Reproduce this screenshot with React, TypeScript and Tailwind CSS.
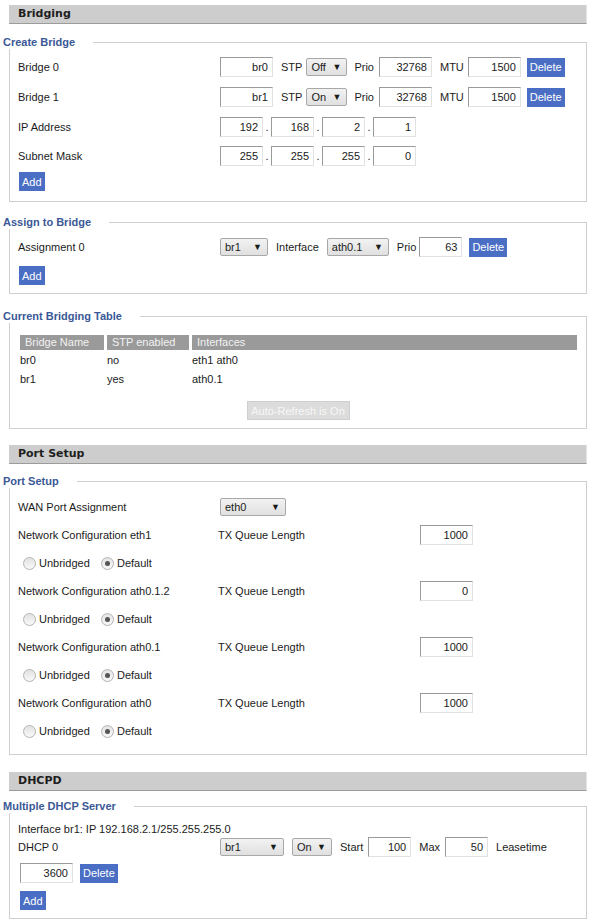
import type { ReactNode } from "react";

const BODY_FONT = "font-['Liberation_Sans',Arial,sans-serif]";

function SectionBar({ title, className = "" }: { title: string; className?: string }) {
  return (
    <div
      className={`flex h-[19px] items-center border-b border-r border-b-[#9c9c9c] border-r-[#e4e4e4] bg-[#cdcdcd] pl-[9px] font-['DejaVu_Sans',Verdana,sans-serif] text-[11px] font-bold text-[#1e1e1e] ${className}`}
    >
      {title}
    </div>
  );
}

function Fieldset({
  legend,
  className = "",
  children,
}: {
  legend: string;
  className?: string;
  children: ReactNode;
}) {
  return (
    <div className={`border border-[#cfcfcf] px-[8px] ${className}`}>
      <div className="-mt-[7px] -ml-[15px] w-fit bg-white pr-[18px] text-[11px] leading-[13px] font-bold text-[#3a5896]">
        {legend}
      </div>
      {children}
    </div>
  );
}

function TextInput({ value, width }: { value: string; width: string }) {
  return (
    <div
      className={`flex h-[20px] shrink-0 items-center justify-end border border-t-[#9a9a9a] border-l-[#9a9a9a] border-r-[#e2e2e2] border-b-[#e2e2e2] bg-white pr-[4px] ${width}`}
    >
      {value}
    </div>
  );
}

function Select({ value, width }: { value: string; width: string }) {
  return (
    <div
      className={`flex h-[18px] shrink-0 items-center justify-between rounded-[2px] border border-[#a8a8a8] bg-gradient-to-b from-[#f2f2f2] to-[#e0e0e0] pr-[5px] pl-[4px] ${width}`}
    >
      <span>{value}</span>
      <span className="text-[9px] text-[#1a1a1a]">▼</span>
    </div>
  );
}

function BlueButton({ label, className = "" }: { label: string; className?: string }) {
  return (
    <button
      type="button"
      className={`flex h-[19px] shrink-0 items-center bg-[#4a6ec4] px-[3px] text-[11px] text-white ${className}`}
    >
      {label}
    </button>
  );
}

function Radio({ checked }: { checked?: boolean }) {
  return (
    <span className="flex size-[13px] shrink-0 items-center justify-center rounded-full border border-[#b4b4b4] bg-gradient-to-b from-[#e2e2e2] to-[#f8f8f8]">
      {checked ? <span className="size-[5px] rounded-full bg-[#555]" /> : null}
    </span>
  );
}

function Label({ children, width = "w-[202px]" }: { children: ReactNode; width?: string }) {
  return <span className={`shrink-0 ${width}`}>{children}</span>;
}

function Dot() {
  return <span className="w-[8px] shrink-0 text-center">.</span>;
}

function BridgeRow({ name, value, stp }: { name: string; value: string; stp: string }) {
  return (
    <div className="flex h-[30px] items-center">
      <Label>{name}</Label>
      <TextInput value={value} width="w-[53px]" />
      <span className="ml-[8px]">STP</span>
      <span className="ml-[4px]">
        <Select value={stp} width="w-[41px]" />
      </span>
      <span className="ml-[7px]">Prio</span>
      <span className="ml-[5px]">
        <TextInput value="32768" width="w-[53px]" />
      </span>
      <span className="ml-[8px]">MTU</span>
      <span className="ml-[4px]">
        <TextInput value="1500" width="w-[53px]" />
      </span>
      <BlueButton label="Delete" className="ml-[6px]" />
    </div>
  );
}

function AddressRow({ label, parts }: { label: string; parts: string[] }) {
  return (
    <div className="flex h-[29px] items-center">
      <Label>{label}</Label>
      {parts.map((part, i) => (
        <span key={i} className="flex items-center">
          {i > 0 ? <Dot /> : null}
          <TextInput value={part} width="w-[43px]" />
        </span>
      ))}
    </div>
  );
}

function PortGroup({ name, queue }: { name: string; queue: string }) {
  return (
    <>
      <div className="flex h-[28px] items-center">
        <Label width="w-[200px]">Network Configuration {name}</Label>
        <Label>TX Queue Length</Label>
        <TextInput value={queue} width="w-[53px]" />
      </div>
      <div className="flex h-[28px] items-center">
        <span className="ml-[5px]">
          <Radio />
        </span>
        <span className="ml-[3px] w-[62px]">Unbridged</span>
        <Radio checked />
        <span className="ml-[3px]">Default</span>
      </div>
    </>
  );
}

export default function App() {
  return (
    <div
      className={`h-[920px] w-[593px] overflow-hidden bg-white pt-[5px] pr-[6px] pl-[9px] text-[11px] leading-[14px] text-[#1b1b1b] ${BODY_FONT}`}
    >
      <SectionBar title="Bridging" />

      <Fieldset legend="Create Bridge" className="mt-[18px] pb-[10px]">
        <div className="pt-[3px]">
          <BridgeRow name="Bridge 0" value="br0" stp="Off" />
          <BridgeRow name="Bridge 1" value="br1" stp="On" />
          <AddressRow label="IP Address" parts={["192", "168", "2", "1"]} />
          <AddressRow label="Subnet Mask" parts={["255", "255", "255", "0"]} />
          <BlueButton label="Add" className="mt-[2px] ml-[1px]" />
        </div>
      </Fieldset>

      <Fieldset legend="Assign to Bridge" className="mt-[20px] pb-[8px]">
        <div className="pt-[3px]">
          <div className="flex h-[30px] items-center">
            <Label>Assignment 0</Label>
            <Select value="br1" width="w-[48px]" />
            <span className="ml-[8px]">Interface</span>
            <span className="ml-[8px]">
              <Select value="ath0.1" width="w-[62px]" />
            </span>
            <span className="ml-[8px]">Prio</span>
            <span className="ml-[3px]">
              <TextInput value="63" width="w-[43px]" />
            </span>
            <BlueButton label="Delete" className="ml-[7px]" />
          </div>
          <BlueButton label="Add" className="mt-[4px] ml-[1px]" />
        </div>
      </Fieldset>

      <Fieldset legend="Current Bridging Table" className="mt-[22px] pb-[8px]">
        <div className="mt-[12px] mr-[1px] ml-[2px]">
          <div className="grid h-[15px] grid-cols-[84px_82px_1fr] items-center gap-x-[3px] text-[#f2f2f2]">
            <div className="h-full bg-[#9a9a9a] pl-[5px] leading-[15px]">Bridge Name</div>
            <div className="h-full bg-[#9a9a9a] pl-[5px] leading-[15px]">STP enabled</div>
            <div className="h-full bg-[#9a9a9a] pl-[5px] leading-[15px]">Interfaces</div>
          </div>
          <div className="grid h-[19px] grid-cols-[84px_82px_1fr] items-center gap-x-[3px]">
            <div>br0</div>
            <div>no</div>
            <div>eth1 ath0</div>
          </div>
          <div className="grid h-[19px] grid-cols-[84px_82px_1fr] items-center gap-x-[3px]">
            <div>br1</div>
            <div>yes</div>
            <div>ath0.1</div>
          </div>
        </div>
        <div className="mt-[13px] flex justify-center">
          <button
            type="button"
            disabled
            className="h-[19px] w-[103px] border border-[#cfcfcf] bg-[#dcdcdc] text-[11px] whitespace-nowrap text-[#f7f7f7]"
          >
            Auto-Refresh is On
          </button>
        </div>
      </Fieldset>

      <SectionBar title="Port Setup" className="mt-[16px]" />

      <Fieldset legend="Port Setup" className="mt-[17px] pb-[9px]">
        <div className="pt-[5px]">
          <div className="flex h-[28px] items-center">
            <Label>WAN Port Assignment</Label>
            <Select value="eth0" width="w-[66px]" />
          </div>
          <PortGroup name="eth1" queue="1000" />
          <PortGroup name="ath0.1.2" queue="0" />
          <PortGroup name="ath0.1" queue="1000" />
          <PortGroup name="ath0" queue="1000" />
        </div>
      </Fieldset>

      <SectionBar title="DHCPD" className="mt-[17px]" />

      <Fieldset legend="Multiple DHCP Server" className="mt-[15px] pb-[8px]">
        <div className="pt-[8px]">
          <div className="flex h-[16px] items-center">Interface br1: IP 192.168.2.1/255.255.255.0</div>
          <div className="flex h-[20px] items-center">
            <Label>DHCP 0</Label>
            <Select value="br1" width="w-[64px]" />
            <span className="ml-[8px]">
              <Select value="On" width="w-[40px]" />
            </span>
            <span className="ml-[8px]">Start</span>
            <span className="ml-[5px]">
              <TextInput value="100" width="w-[43px]" />
            </span>
            <span className="ml-[8px]">Max</span>
            <span className="ml-[5px]">
              <TextInput value="50" width="w-[43px]" />
            </span>
            <span className="ml-[8px]">Leasetime</span>
          </div>
          <div className="mt-[6px] flex items-center">
            <span className="ml-[2px]">
              <TextInput value="3600" width="w-[53px]" />
            </span>
            <BlueButton label="Delete" className="ml-[7px]" />
          </div>
          <BlueButton label="Add" className="mt-[8px] ml-[2px]" />
        </div>
      </Fieldset>
    </div>
  );
}
